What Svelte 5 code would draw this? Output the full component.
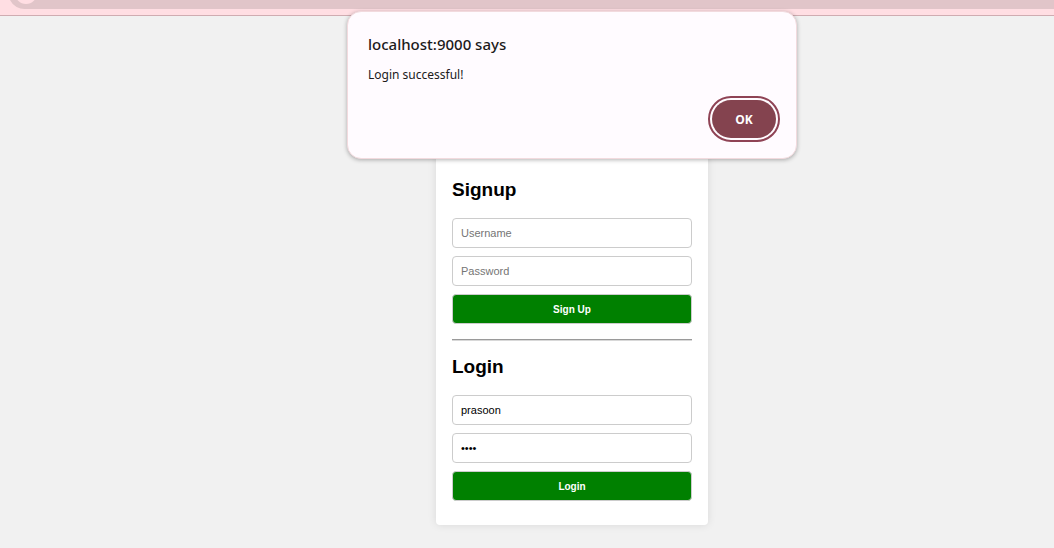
<script>
  let signupName = $state('');
  let signupPassword = $state('');
  let loginName = $state('prasoon');
  let loginPassword = $state('pass');
</script>

<div class="toolbar">
  <svg width="60" height="15" viewBox="0 0 60 15" aria-hidden="true">
    <path d="M10 0 A16 16 0 0 0 26 9 H60 V0 Z" fill="#e1c5c9" />
    <circle cx="26" cy="-7" r="11" fill="#ffdee3" />
  </svg>
  <div class="address"></div>
</div>

<main>
  <div class="card">
    <form onsubmit={(e) => e.preventDefault()}>
      <h2>Signup</h2>
      <input type="text" placeholder="Username" aria-label="Username" bind:value={signupName} />
      <input type="password" placeholder="Password" aria-label="Password" bind:value={signupPassword} />
      <button class="submit">Sign Up</button>
    </form>
    <hr />
    <form onsubmit={(e) => e.preventDefault()}>
      <h2>Login</h2>
      <input type="text" placeholder="Username" aria-label="Username" bind:value={loginName} />
      <input type="password" placeholder="Password" aria-label="Password" bind:value={loginPassword} />
      <button class="submit">Login</button>
    </form>
  </div>
</main>

<div class="overlay">
  <div class="alert" role="alertdialog" aria-labelledby="alert-title" aria-describedby="alert-text">
    <div id="alert-title" class="title">localhost:9000 says</div>
    <div id="alert-text" class="message">Login successful!</div>
    <button class="ok">OK</button>
  </div>
</div>

<style>
  :global(body) {
    background: #f1f1f1;
    font-family: "Liberation Sans", Arial, sans-serif;
  }

  .toolbar {
    display: flex;
    height: 15px;
    background: #ffdee3;
    border-bottom: 1px solid #cfacb1;
  }

  .toolbar svg {
    display: block;
  }

  .address {
    flex: 1;
    height: 9px;
    background: #e1c5c9;
  }

  main {
    display: flex;
    justify-content: center;
    padding: 131px 0 23px 90px;
  }

  .card {
    box-sizing: border-box;
    width: 272px;
    padding: 16px 16px 24px;
    background: #fff;
    border-radius: 4px;
    box-shadow: 0 0 8px rgba(0, 0, 0, 0.1);
  }

  form {
    display: flex;
    flex-direction: column;
    gap: 8px;
  }

  h2 {
    margin: 16px 0 9px;
    font-size: 19px;
    line-height: 22px;
    color: #000;
  }

  hr {
    box-sizing: border-box;
    height: 2px;
    margin: 15px 0 -1px;
    border: 0;
    border-top: 1px solid #9a9a9a;
    border-bottom: 1px solid #d8d8d8;
  }

  input,
  .submit {
    box-sizing: border-box;
    width: 100%;
    height: 30px;
    padding: 0 8px;
    border: 1px solid #ccc;
    border-radius: 4px;
    font-family: inherit;
    font-size: 11px;
    outline: none;
  }

  input {
    background: #fff;
    color: #000;
  }

  input::placeholder {
    color: #757575;
  }

  .submit {
    background: #008000;
    color: #fff;
    font-size: 10px;
    font-weight: 700;
  }

  .overlay {
    position: absolute;
    top: 11px;
    left: 0;
    right: 0;
    display: flex;
    justify-content: center;
    padding-left: 90px;
    pointer-events: none;
  }

  .alert {
    box-sizing: border-box;
    display: flex;
    flex-direction: column;
    width: 450px;
    padding: 22px 20px 20px;
    background: #fffbff;
    border: 1px solid #f2dade;
    border-radius: 14px;
    box-shadow: 0 1px 4px rgba(0, 0, 0, 0.3);
    font-family: "Segoe UI", "Noto Sans", sans-serif;
    color: #201a1b;
    pointer-events: auto;
  }

  .title {
    font-size: 15px;
    font-weight: 500;
    line-height: 20px;
  }

  .message {
    margin-top: 12px;
    font-size: 12px;
    line-height: 18px;
  }

  .ok {
    align-self: flex-end;
    width: 64px;
    height: 38px;
    margin-top: 16px;
    padding: 0;
    border: 0;
    border-radius: 19px;
    background: #84434f;
    outline: 2px solid #8f4355;
    outline-offset: 2px;
    color: #fff;
    font: 700 12px "Segoe UI", "Open Sans", sans-serif;
  }
</style>
